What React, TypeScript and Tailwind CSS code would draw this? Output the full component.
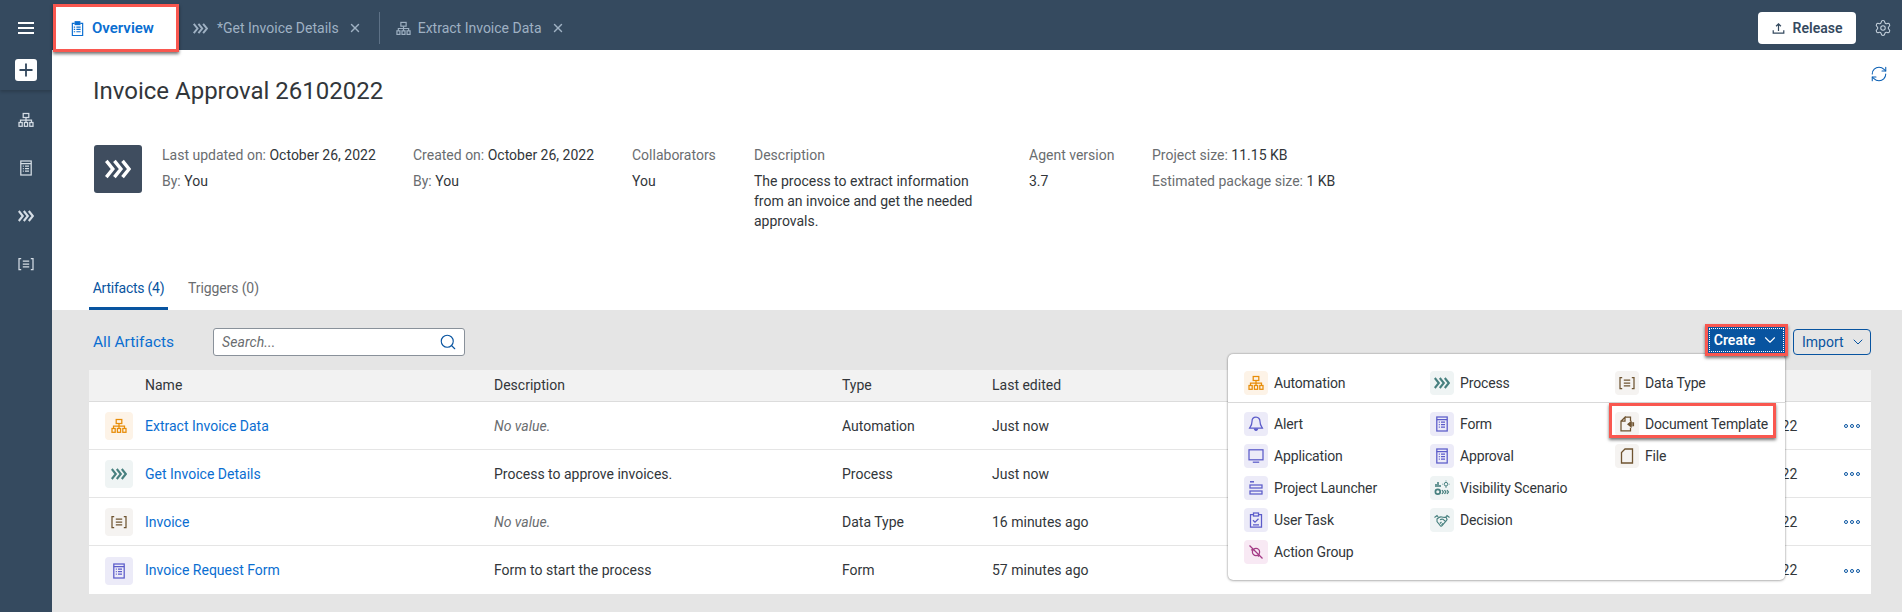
import React from "react";
import { ChevronDown, Search, Settings, X, RefreshCw, Plus } from "lucide-react";

type IP = { className?: string };
const S = ({ className, children, sw = 1.25 }: IP & { children: React.ReactNode; sw?: number }) => (
  <svg viewBox="0 0 16 16" fill="none" stroke="currentColor" strokeWidth={sw} className={className}>{children}</svg>
);
const Sitemap = ({ className }: IP) => (
  <S className={className}>
    <rect x="5.2" y="1.5" width="5.6" height="4" />
    <path d="M8 5.5V8M2.5 10.5V8h11v2.500M8 8v2.500" />
    <rect x="1" y="10.500" width="3.200" height="3.800" />
    <rect x="6.400" y="10.500" width="3.200" height="3.800" />
    <rect x="11.800" y="10.500" width="3.200" height="3.800" />
  </S>
);
const Chevrons = ({ className }: IP) => (
  <S className={className} sw={2.1}>
    <path d="M.8 3 4.800 8 .8 13M5.800 3 9.800 8 5.800 13M10.800 3 14.800 8 10.800 13" />
  </S>
);
const DataType = ({ className }: IP) => (
  <S className={className}>
    <path d="M3.200 2.500H1v11h2.200M12.800 2.500H15v11h-2.200M4.800 5.200h6.400M4.800 8h6.400M4.800 10.800h6.400" />
  </S>
);
const FormIcon = ({ className }: IP) => (
  <S className={className}>
    <rect x="2.800" y="1" width="10.400" height="14" />
    <path d="M2.800 3.500h10.400M7 6h4M7 8.500h4M7 11h4M4.800 6h1M4.800 8.500h1M4.800 11h1" />
  </S>
);
const Bell = ({ className }: IP) => (
  <S className={className}>
    <path d="M8 1.200c-2.700 0-4 2-4 4.300 0 4-1.800 5.300-2.400 6.500h12.800C13.800 10.800 12 9.500 12 5.500c0-2.300-1.300-4.300-4-4.300z" />
    <path d="M6.500 13.200c.4 1.600 2.600 1.600 3 0z" fill="currentColor" />
  </S>
);
const Monitor = ({ className }: IP) => (
  <S className={className}>
    <rect x="1" y="1.800" width="14" height="10" />
    <path d="M4.800 14.200h6.400" />
  </S>
);
const Launcher = ({ className }: IP) => (
  <S className={className}>
    <path d="M2 1.800h4" strokeWidth="1.500" />
    <rect x="2" y="5" width="12" height="3" />
    <rect x="2" y="11" width="12" height="3" />
  </S>
);
const TaskIcon = ({ className }: IP) => (
  <S className={className}>
    <path d="M5.500 2.500H2.500v12.500h11V2.500h-3" />
    <rect x="5.500" y="1" width="5" height="3" />
    <path d="M5 8.200l2 2 3.500-3.500M5 12.800h6" />
  </S>
);
const ActionIcon = ({ className }: IP) => (
  <S className={className}>
    <path d="M1.500 1.500l13 13" />
    <circle cx="8" cy="8" r="3.600" />
    <path d="M3 6.200l2.200-1.200M10 12.500l1.500-2" />
  </S>
);
const Visibility = ({ className }: IP) => (
  <S className={className} sw={1.3}>
    <path d="M2 7V4M4 7V2M6 7V5" strokeWidth="1.600" />
    <circle cx="3.800" cy="11.800" r="2.400" strokeWidth="1.700" />
    <path d="M8 10l1.400 2-1.400 2M10.500 10l1.400 2-1.400 2M13 10l1.400 2-1.400 2" />
    <circle cx="12" cy="4.200" r="1.800" strokeWidth="1" />
    <path d="M11.200 7h1.600M12 .6v.8M9 4.200H8.400M15.500 4.200h-.6" strokeWidth="1" />
  </S>
);
const Handshake = ({ className }: IP) => (
  <S className={className} sw={1.1}>
    <path d="M.5 5.500l2.500-2 1.200 1.500M15.500 5.500l-2.500-2-1.200 1.500" />
    <path d="M3 7c1.500-1.500 3-2.500 4.800-2 1.300.4 2.500.6 4.300.2l1 2.500-5 6c-.6.7-1.500.6-2-.2L3 9.500z" />
    <path d="M6 7.800c1-.6 1.800-1 3-.5l3 2.500M5.800 11.500l1.700-1.500M7.500 12.800L9 11.300" />
  </S>
);
const DocTemplate = ({ className }: IP) => (
  <S className={className}>
    <path d="M6 1.200h5.500v4M2 5.200L6 1.200v4H2v9.600h9.500v-3" />
    <path d="M9 8.200l3-2.400v4.800z" fill="currentColor" />
    <path d="M13 6v4.500M14.500 6.200v4.100" strokeWidth="1.200" />
  </S>
);
const FileIcon = ({ className }: IP) => (
  <S className={className}>
    <path d="M6 1h7.500v14h-11V4.500z" strokeWidth="1.300" />
  </S>
);
const Overview = ({ className }: IP) => (
  <S className={className}>
    <path d="M5 2.500H2.500v13h11v-13H11" />
    <rect x="5.500" y=".8" width="5" height="3" fill="currentColor" />
    <path d="M6.800 6.500h4.500M6.800 9h4.500M6.800 11.500h4.500M4 6.500h1.500M4 9h1.500M4 11.500h1.500" />
  </S>
);
const Release = ({ className }: IP) => (
  <S className={className} sw={1.500}>
    <path d="M1.500 10v3.800h13V10M8 11V2.500M5 5.200L8 2.200l3 3" />
  </S>
);

const purple = "bg-[#ecebf8] text-[#5b5bc9]";
const orange = "bg-[#fdf3e7] text-[#e78c07]";
const teal = "bg-[#eff4f4] text-[#47807f]";
const brown = "bg-[#f5f3f1] text-[#6f5431]";
const pink = "bg-[#f8e9f4] text-[#a33a85]";

const Tile = ({ Icon, tone, large }: { Icon: React.FC<IP>; tone: string; large?: boolean }) => (
  <span className={`flex shrink-0 items-center justify-center rounded-[4px] ${tone} ${large ? "h-[28px] w-[28px]" : "h-[24px] w-[24px]"}`}>
    <Icon className="h-[16px] w-[16px]" />
  </span>
);

const MenuItem = ({ Icon, tone, label }: { Icon: React.FC<IP>; tone: string; label: string }) => (
  <div className="flex h-[24px] items-center gap-[6px] whitespace-nowrap text-[14px] text-[#32363a]">
    <Tile Icon={Icon} tone={tone} />
    <span className="tracking-[-0.15px]">{label}</span>
  </div>
);

const rows = [
  { Icon: Sitemap, tone: orange, name: "Extract Invoice Data", desc: "No value.", empty: true, type: "Automation", edited: "Just now" },
  { Icon: Chevrons, tone: teal, name: "Get Invoice Details", desc: "Process to approve invoices.", type: "Process", edited: "Just now" },
  { Icon: DataType, tone: brown, name: "Invoice", desc: "No value.", empty: true, type: "Data Type", edited: "16 minutes ago" },
  { Icon: FormIcon, tone: purple, name: "Invoice Request Form", desc: "Form to start the process", type: "Form", edited: "57 minutes ago" },
];
const gridCols = "grid grid-cols-[56px_349px_348px_150px_699px_145px_35px] items-center";

const Label = ({ children }: { children: React.ReactNode }) => <span className="text-[#6a6d70]">{children}</span>;

export default function App() {
  return (
    <div className="flex h-[612px] w-full overflow-hidden bg-white text-[14px] text-[#32363a]" style={{ fontFamily: "Roboto, sans-serif" }}>
      <aside className="flex w-[52px] shrink-0 flex-col bg-[#354a5f] text-white">
        <div className="flex h-[90px] flex-col items-center shadow-[0_2px_3px_rgba(0,0,0,0.18)]">
          <div className="mt-[22px] flex w-[16px] flex-col gap-[3px]">
            <span className="h-[2px] bg-white" />
            <span className="h-[2px] bg-white" />
            <span className="h-[2px] bg-white" />
          </div>
          <div className="mt-[25px] flex h-[22px] w-[22px] items-center justify-center rounded-[3px] bg-white text-[#354a5f]">
            <Plus className="h-[20px] w-[20px]" strokeWidth={2.200} />
          </div>
        </div>
        <div className="mt-[22px] flex flex-col items-center gap-[32px] text-[#d5dde5]">
          <Sitemap className="h-[16px] w-[16px]" />
          <FormIcon className="h-[16px] w-[16px]" />
          <Chevrons className="h-[16px] w-[16px]" />
          <DataType className="h-[16px] w-[16px]" />
        </div>
      </aside>

      <main className="flex min-w-0 flex-1 flex-col">
        <header className="flex h-[50px] shrink-0 bg-[#354a5f] text-[#9fb1c3]">
          <div className="relative z-10 ml-[1px] mt-[4px] flex h-[48px] w-[126px] items-center gap-[7px] border-[3px] border-[#f9574f] bg-white pl-[14px] text-[15px] font-semibold text-[#0a6ed1] shadow-[0_2px_3px_rgba(0,0,0,0.55)]">
            <Overview className="h-[15px] w-[15px]" />
            <span>Overview</span>
          </div>
          <div className="ml-[14px] flex items-center pt-[6px]">
            <Chevrons className="h-[15px] w-[15px]" />
            <span className="ml-[9px] whitespace-nowrap">*Get Invoice Details</span>
            <X className="ml-[9px] h-[14px] w-[14px]" strokeWidth={2.500} />
          </div>
          <div className="ml-[17px] mt-[12px] h-[32px] w-px bg-[#5d7186]" />
          <div className="ml-[16px] flex items-center pt-[6px]">
            <Sitemap className="h-[15px] w-[15px]" />
            <span className="ml-[7px] whitespace-nowrap">Extract Invoice Data</span>
            <X className="ml-[9px] h-[14px] w-[14px]" strokeWidth={2.500} />
          </div>
          <div className="ml-auto flex items-center gap-[18px] pr-[10px] pt-[6px]">
            <button className="flex h-[32px] w-[98px] items-center justify-center gap-[8px] rounded-[4px] bg-white font-semibold text-[#354a5f]">
              <Release className="h-[13px] w-[13px]" />
              Release
            </button>
            <Settings className="h-[18px] w-[18px] text-[#c6d2dd]" strokeWidth={1.400} />
          </div>
        </header>

        <section className="h-[260px] shrink-0 bg-white">
          <div className="flex items-start justify-between pl-[41px] pr-[14px] pt-[25px]">
            <h1 className="text-[24px] leading-[32px] text-[#32363a]">Invoice Approval 26102022</h1>
            <RefreshCw className="-mt-[10px] h-[18px] w-[18px] text-[#0a5fb4]" strokeWidth={1.400} />
          </div>
          <div className="mt-[35px] flex pl-[42px]">
            <div className="mt-[3px] flex h-[48px] w-[48px] shrink-0 items-center justify-center rounded-[3px] bg-[#3f4d5f] text-white">
              <Chevrons className="h-[26px] w-[26px]" />
            </div>
            <div className="ml-[20px] w-[251px] leading-[26px]">
              <div><Label>Last updated on: </Label>October 26, 2022</div>
              <div><Label>By: </Label>You</div>
            </div>
            <div className="w-[219px] leading-[26px]">
              <div><Label>Created on: </Label>October 26, 2022</div>
              <div><Label>By: </Label>You</div>
            </div>
            <div className="w-[122px] leading-[26px]">
              <div><Label>Collaborators</Label></div>
              <div>You</div>
            </div>
            <div className="w-[275px]">
              <div className="leading-[26px]"><Label>Description</Label></div>
              <div className="w-[225px] pt-[3px] leading-[20px]">The process to extract information from an invoice and get the needed approvals.</div>
            </div>
            <div className="w-[123px] leading-[26px]">
              <div><Label>Agent version</Label></div>
              <div>3.7</div>
            </div>
            <div className="leading-[26px]">
              <div><Label>Project size: </Label>11.15 KB</div>
              <div><Label>Estimated package size: </Label>1 KB</div>
            </div>
          </div>
          <nav className="mt-[39px] flex pl-[37px]">
            <div className="flex h-[40px] w-[79px] items-center justify-center border-b-[3px] border-[#0854a0] tracking-[-0.25px] text-[#0854a0]">Artifacts (4)</div>
            <div className="ml-[20px] flex h-[37px] items-center tracking-[-0.1px] text-[#6a6d70]">Triggers (0)</div>
          </nav>
        </section>

        <section className="relative flex-1 bg-[#e5e5e5] pl-[37px] pr-[31px]">
          <div className="flex h-[60px] items-center pt-[4px]">
            <a className="w-[124px] pl-[4px] pt-[1px] text-[15.5px] text-[#0a6ed1]">All Artifacts</a>
            <div className="flex h-[28px] w-[252px] items-center justify-between rounded-[3px] border border-[#89919a] bg-white pl-[8px] pr-[7px] italic text-[#6a6d70]">
              <span className="tracking-[0.1px]">Search...</span>
              <Search className="h-[18px] w-[18px] text-[#0854a0]" strokeWidth={1.500} />
            </div>
            <div className="ml-auto flex items-center gap-[5px]">
              <button className="relative z-20 mb-[4px] flex h-[32px] w-[83px] items-center justify-center gap-[6px] border-[3px] border-[#f9574f] bg-[#0854a0] font-semibold text-white shadow-[0_2px_3px_rgba(0,0,0,0.55)] outline-1 -outline-offset-[5px] outline-dotted outline-white">
                Create
                <ChevronDown className="h-[18px] w-[18px]" strokeWidth={1.500} />
              </button>
              <button className="flex h-[26px] w-[78px] items-center gap-[6px] rounded-[4px] border border-[#0854a0] pl-[8px] text-[#0854a0]">
                Import
                <ChevronDown className="h-[16px] w-[16px]" strokeWidth={1.500} />
              </button>
            </div>
          </div>

          <div className="bg-white">
            <div className={`${gridCols} h-[32px] border-b border-[#dcdcdc] bg-[#f2f2f2]`}>
              <span />
              <span>Name</span>
              <span>Description</span>
              <span>Type</span>
              <span>Last edited</span>
              <span />
              <span />
            </div>
            {rows.map((r, i) => (
              <div key={r.name} className={`${gridCols} h-[48px] pt-[1px] ${i < rows.length - 1 ? "border-b border-[#e5e5e5]" : ""}`}>
                <span className="pl-[16px]"><Tile Icon={r.Icon} tone={r.tone} large /></span>
                <span className="text-[#0a6ed1]">{r.name}</span>
                <span className={r.empty ? "italic text-[#6a6d70]" : ""}>{r.desc}</span>
                <span>{r.type}</span>
                <span>{r.edited}</span>
                <span>October 26, 2022</span>
                <span className="flex gap-[2px] pl-[8px]">
                  <i className="h-[4px] w-[4px] rounded-full border border-[#0854a0]" />
                  <i className="h-[4px] w-[4px] rounded-full border border-[#0854a0]" />
                  <i className="h-[4px] w-[4px] rounded-full border border-[#0854a0]" />
                </span>
              </div>
            ))}
          </div>

          <div className="absolute right-[117px] top-[44px] z-10 h-[226px] w-[557px] rounded-[5px] bg-white shadow-[0_0_2px_rgba(0,0,0,0.4),0_1px_3px_rgba(0,0,0,0.2)]">
            <div className="grid h-[49px] grid-cols-[186px_185px_1fr] border-b border-[#d9d9d9] pl-[16px] pt-[17px]">
              <MenuItem Icon={Sitemap} tone={orange} label="Automation" />
              <MenuItem Icon={Chevrons} tone={teal} label="Process" />
              <MenuItem Icon={DataType} tone={brown} label="Data Type" />
            </div>
            <div className="grid grid-cols-[186px_185px_1fr] pl-[16px] pt-[9px]">
              <div className="flex flex-col gap-[8px]">
                <MenuItem Icon={Bell} tone={purple} label="Alert" />
                <MenuItem Icon={Monitor} tone={purple} label="Application" />
                <MenuItem Icon={Launcher} tone={purple} label="Project Launcher" />
                <MenuItem Icon={TaskIcon} tone={purple} label="User Task" />
                <MenuItem Icon={ActionIcon} tone={pink} label="Action Group" />
              </div>
              <div className="flex flex-col gap-[8px]">
                <MenuItem Icon={FormIcon} tone={purple} label="Form" />
                <MenuItem Icon={FormIcon} tone={purple} label="Approval" />
                <MenuItem Icon={Visibility} tone={teal} label="Visibility Scenario" />
                <MenuItem Icon={Handshake} tone={teal} label="Decision" />
              </div>
              <div className="flex flex-col gap-[8px]">
                <MenuItem Icon={DocTemplate} tone={brown} label="Document Template" />
                <MenuItem Icon={FileIcon} tone={brown} label="File" />
              </div>
            </div>
            <div className="absolute left-[381px] top-[49px] h-[35px] w-[167px] border-[3px] border-[#f9574f] shadow-[0_2px_3px_rgba(0,0,0,0.55)]" />
          </div>
        </section>
      </main>
    </div>
  );
}
